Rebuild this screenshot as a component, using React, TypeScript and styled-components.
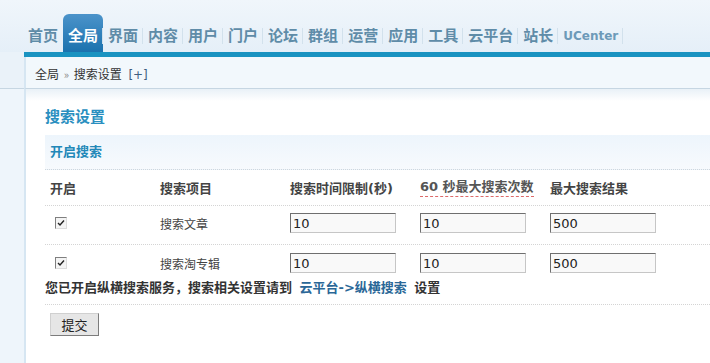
import React from 'react';
import styled, { createGlobalStyle } from 'styled-components';

const GlobalStyle = createGlobalStyle`
  html, body {
    margin: 0;
    padding: 0;
    background: #fff;
  }
  body {
    font-family: 'DejaVu Sans', 'Noto Sans CJK SC', sans-serif;
    font-size: 12px;
    color: #333;
    overflow: hidden;
  }
`;

const navItems = ['首页', '全局', '界面', '内容', '用户', '门户', '论坛', '群组', '运营', '应用', '工具', '云平台', '站长', 'UCenter'];

const rows = [
  { name: '搜索文章', time: '10', count: '10', max: '500' },
  { name: '搜索淘专辑', time: '10', count: '10', max: '500' },
];

export default function App() {
  return (
    <>
      <GlobalStyle />
      <Page>
        <Header>
          <Nav>
            {navItems.map((item, i) => (
              <NavItem
                key={item}
                $active={item === '全局'}
                $noSep={i === 0 || item === '全局'}
                $latin={item === 'UCenter'}
              >
                {item}
              </NavItem>
            ))}
          </Nav>
        </Header>
        <Frame>
          <Side>
            <SideTop />
          </Side>
          <Main>
            <BlueBar />
            <Crumbs>
              全局 <Raquo>»</Raquo> 搜索设置 <Plus>[+]</Plus>
            </Crumbs>
            <Content>
              <Title>搜索设置</Title>
              <SectionHead>开启搜索</SectionHead>
              <Row $head>
                <Cell>开启</Cell>
                <Cell>搜索项目</Cell>
                <Cell>搜索时间限制(秒)</Cell>
                <Cell>
                  <Hint>60 秒最大搜索次数</Hint>
                </Cell>
                <Cell>最大搜索结果</Cell>
              </Row>
              {rows.map((r, i) => (
                <Row key={r.name} $last={i === rows.length - 1}>
                  <Cell>
                    <Check>
                      <svg width="8" height="8" viewBox="0 0 8 8">
                        <path d="M1 4 L3 6 L7 1.5" fill="none" stroke="#222" strokeWidth="1.4" />
                      </svg>
                    </Check>
                  </Cell>
                  <Cell $plain>{r.name}</Cell>
                  <Cell><Input defaultValue={r.time} /></Cell>
                  <Cell><Input defaultValue={r.count} /></Cell>
                  <Cell><Input defaultValue={r.max} /></Cell>
                </Row>
              ))}
              <Notice>
                您已开启纵横搜索服务，搜索相关设置请到 <NoticeLink href="#">云平台-&gt;纵横搜索</NoticeLink> 设置
              </Notice>
              <Submit type="button">提交</Submit>
            </Content>
          </Main>
        </Frame>
      </Page>
    </>
  );
}

const Page = styled.div`
  width: 710px;
  height: 363px;
  display: flex;
  flex-direction: column;
  background: #fff;
`;

const Header = styled.div`
  height: 52px;
  display: flex;
  align-items: flex-end;
  background: linear-gradient(#f0f6fb, #e5eff8);
`;

const Nav = styled.div`
  display: flex;
  padding-left: 23px;
`;

const NavItem = styled.div<{ $active?: boolean; $noSep?: boolean; $latin?: boolean }>`
  position: relative;
  height: 38px;
  box-sizing: border-box;
  padding: 11px 5px 5px 5px;
  line-height: 22px;
  font-size: ${(p) => (p.$latin ? '12px' : '15px')};
  font-weight: bold;
  color: ${(p) => (p.$active ? '#fff' : p.$latin ? '#6d9ab8' : '#5f8ca8')};
  background: ${(p) => (p.$active ? 'linear-gradient(#4b93ca, #1b72ae)' : 'transparent')};
  border-radius: ${(p) => (p.$active ? '6px 6px 0 0' : '0')};
  &::before {
    content: '';
    display: ${(p) => (p.$noSep ? 'none' : 'block')};
    position: absolute;
    left: -1px;
    top: 14px;
    width: 1px;
    height: 16px;
    background: #d2e1ec;
  }
  &:last-child::after {
    content: '';
    position: absolute;
    right: 0;
    top: 14px;
    width: 1px;
    height: 16px;
    background: #d2e1ec;
  }
`;

const Frame = styled.div`
  flex: 1;
  display: flex;
  min-height: 0;
`;

const Side = styled.div`
  width: 24px;
  background: #eef5fb;
`;

const SideTop = styled.div`
  height: 36px;
  border-bottom: 1px solid #c6d6e2;
  background: #eaf2f9;
`;

const Main = styled.div`
  flex: 1;
  display: flex;
  flex-direction: column;
  min-width: 0;
`;

const BlueBar = styled.div`
  height: 5px;
  background: #1a93c1;
`;

const Crumbs = styled.div`
  height: 28px;
  line-height: 28px;
  padding: 3px 0 0 9px;
  border-left: 2px solid #d6e6f2;
  border-bottom: 1px solid #c6d6e2;
  background: #f2f8fc;
  font-family: 'Noto Sans CJK SC', sans-serif;
  font-size: 12px;
  color: #333;
`;

const Raquo = styled.span`
  color: #888;
  font-size: 11px;
  margin: 0 2px;
`;

const Plus = styled.span`
  color: #3d5f80;
  margin-left: 4px;
  font-family: 'DejaVu Sans', sans-serif;
  font-size: 12px;
`;

const Content = styled.div`
  flex: 1;
  border-left: 2px solid #d6e6f2;
  padding-left: 19px;
  background: linear-gradient(#e9f1f7, #fff 12px);
  overflow: hidden;
`;

const Title = styled.div`
  margin-top: 18px;
  height: 20px;
  line-height: 20px;
  margin-bottom: 8px;
  font-size: 15px;
  font-weight: bold;
  color: #2a8fc0;
`;

const SectionHead = styled.div`
  height: 34px;
  line-height: 34px;
  padding-left: 5px;
  background: linear-gradient(#edf5fc, #f7fafd);
  border-bottom: 1px dotted #cfd6dc;
  font-size: 13px;
  font-weight: bold;
  color: #2288b8;
`;

const Row = styled.div<{ $head?: boolean; $last?: boolean }>`
  display: grid;
  grid-template-columns: 110px 130px 130px 130px 1fr;
  align-items: ${(p) => (p.$head ? 'center' : 'start')};
  height: ${(p) => (p.$head ? '35px' : p.$last ? '23px' : '31px')};
  padding: ${(p) => (p.$head ? '0 0 0 5px' : p.$last ? '8px 0 0 5px' : '7px 0 0 5px')};
  border-bottom: ${(p) => (p.$last ? 'none' : '1px dotted #d4d4d4')};
  font-size: 13px;
  font-weight: ${(p) => (p.$head ? 'bold' : 'normal')};
  color: #444;
`;

const Cell = styled.div<{ $plain?: boolean }>`
  display: flex;
  align-items: center;
  min-height: 20px;
  font-size: ${(p) => (p.$plain ? '12px' : 'inherit')};
  color: ${(p) => (p.$plain ? '#444' : 'inherit')};
`;

const Hint = styled.span`
  color: #555;
  border-bottom: 1px dashed #dd6a6a;
  line-height: 18px;
`;

const Check = styled.span`
  display: inline-flex;
  align-items: center;
  justify-content: center;
  width: 12px;
  height: 12px;
  box-sizing: border-box;
  margin-left: 5px;
  border: 1px solid;
  border-color: #7f7f7f #dcdcdc #dcdcdc #7f7f7f;
  background: #f4f4f4;
`;

const Input = styled.input`
  width: 106px;
  height: 20px;
  box-sizing: border-box;
  padding: 0 2px;
  border: 1px solid;
  border-color: #6f6f6f #c6c6c6 #c6c6c6 #6f6f6f;
  background: #f9f9f9;
  font-family: 'DejaVu Sans', sans-serif;
  font-size: 13px;
  color: #222;
  outline: none;
`;

const Notice = styled.div`
  padding: 4px 0 8px;
  line-height: 16px;
  border-bottom: 1px dotted #d4d4d4;
  font-size: 13px;
  font-weight: bold;
  color: #333;
`;

const NoticeLink = styled.a`
  color: #2a6797;
  text-decoration: none;
  margin: 0 3px;
`;

const Submit = styled.button`
  display: block;
  margin: 8px 0 0 5px;
  width: 49px;
  height: 23px;
  padding: 0;
  border: 1px solid;
  border-color: #d0d0d0 #7c7c7c #7c7c7c #d0d0d0;
  background: #e6e6e6;
  font-family: 'Noto Sans CJK SC', sans-serif;
  font-size: 13px;
  color: #222;
`;
